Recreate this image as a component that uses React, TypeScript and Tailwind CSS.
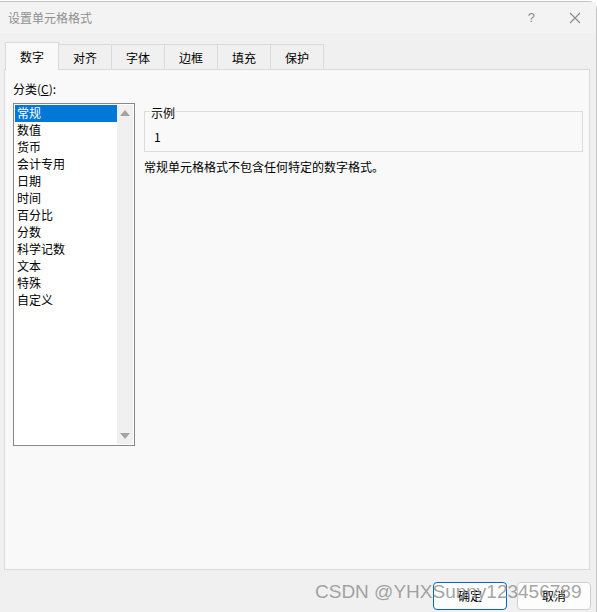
import React from "react";

const items = ["常规", "数值", "货币", "会计专用", "日期", "时间", "百分比", "分数", "科学记数", "文本", "特殊", "自定义"];
const tabs = ["数字", "对齐", "字体", "边框", "填充", "保护"];

export default function App() {
  return (
    <div
      className="relative w-[597px] h-[612px] overflow-hidden bg-white text-[12px] text-black"
      style={{ fontFamily: '"Noto Sans CJK SC", "Noto Sans", sans-serif' }}
    >
      <div className="absolute left-0 right-0 top-[1px] bottom-0 flex flex-col rounded-tr-[8px] border-t border-r border-[#c4c4c4] bg-[#f0f0f0]">
        {/* title bar */}
        <div className="flex h-[31px] shrink-0 items-center bg-[#f3f3f3] pl-[8px]">
          <span className="text-[12px] text-[#8f8f8f]">设置单元格格式</span>
          <span className="ml-auto mr-[34px] text-[13px] text-[#8a8a8a]" style={{ fontFamily: '"Liberation Sans", sans-serif' }}>?</span>
          <svg width="12" height="12" viewBox="0 0 12 12" className="mr-[15px]">
            <path d="M1 1 L11 11 M11 1 L1 11" stroke="#8a8a8a" strokeWidth="1.1" />
          </svg>
        </div>
        {/* tabs */}
        <div className="mt-[9px] flex h-[27px] items-end pl-[5px]">
          {tabs.map((t, i) =>
            i === 0 ? (
              <div
                key={t}
                className="relative z-10 -mb-px flex h-[28px] w-[54px] items-center justify-center border border-b-0 border-[#dadada] bg-[#f9f9f9]"
              >
                {t}
              </div>
            ) : (
              <div
                key={t}
                className="flex h-[25px] w-[53px] items-center justify-center border border-l-0 border-b-0 border-[#dadada] bg-[#f0f0f0] pt-[1px]"
              >
                {t}
              </div>
            )
          )}
        </div>
        {/* panel */}
        <div className="ml-[4px] mr-[6px] flex h-[501px] border border-[#dadada] bg-[#f9f9f9] pl-[8px] pt-[8px]">
          <div className="flex w-[122px] flex-col">
            <div className="h-[22px] leading-[22px]">
              分类(<span className="underline">C</span>):
            </div>
            <div className="mt-[3px] flex h-[343px] border border-[#858791] bg-white p-[1px]">
              <div className="flex-1">
                {items.map((it, i) => (
                  <div
                    key={it}
                    className={
                      "h-[17px] pl-[2px] leading-[15px] " + (i === 0 ? "bg-[#0078d7] text-white" : "")
                    }
                  >
                    {it}
                  </div>
                ))}
              </div>
              <div className="flex w-[16px] flex-col items-center justify-between bg-[#f0f0f0] py-[5px]">
                <svg width="10" height="6" viewBox="0 0 10 6">
                  <path d="M5 0 L10 6 L0 6 Z" fill="#a3a3a3" />
                </svg>
                <svg width="10" height="6" viewBox="0 0 10 6">
                  <path d="M0 0 L10 0 L5 6 Z" fill="#a3a3a3" />
                </svg>
              </div>
            </div>
          </div>
          <div className="ml-[9px] mr-[6px] flex flex-1 flex-col">
            <div className="relative mt-[33px] h-[41px] border border-[#dcdcdc]">
              <span className="absolute left-[5px] top-[-7px] bg-[#f9f9f9] px-[1px] leading-[16px]">示例</span>
              <div className="pl-[9px] pt-[15px] leading-[20px]">1</div>
            </div>
            <div className="mt-[7px] leading-[16px]">常规单元格格式不包含任何特定的数字格式。</div>
          </div>
        </div>
        {/* buttons */}
        <div className="mt-[12px] flex justify-end gap-[10px] pr-[5px]">
          <div className="flex h-[28px] w-[74px] items-center justify-center rounded-[4px] border border-[#0067c0] bg-[#fdfdfd]">
            确定
          </div>
          <div className="flex h-[28px] w-[74px] items-center justify-center rounded-[4px] border border-[#d0d0d0] bg-[#fdfdfd]">
            取消
          </div>
        </div>
      </div>
      <div
        className="pointer-events-none absolute left-[315px] top-[580px] text-[19px] leading-[24px] text-[#8c8c8c]/80"
        style={{ fontFamily: '"Liberation Sans", sans-serif' }}
      >
        CSDN @YHXSunny123456789
      </div>
    </div>
  );
}
